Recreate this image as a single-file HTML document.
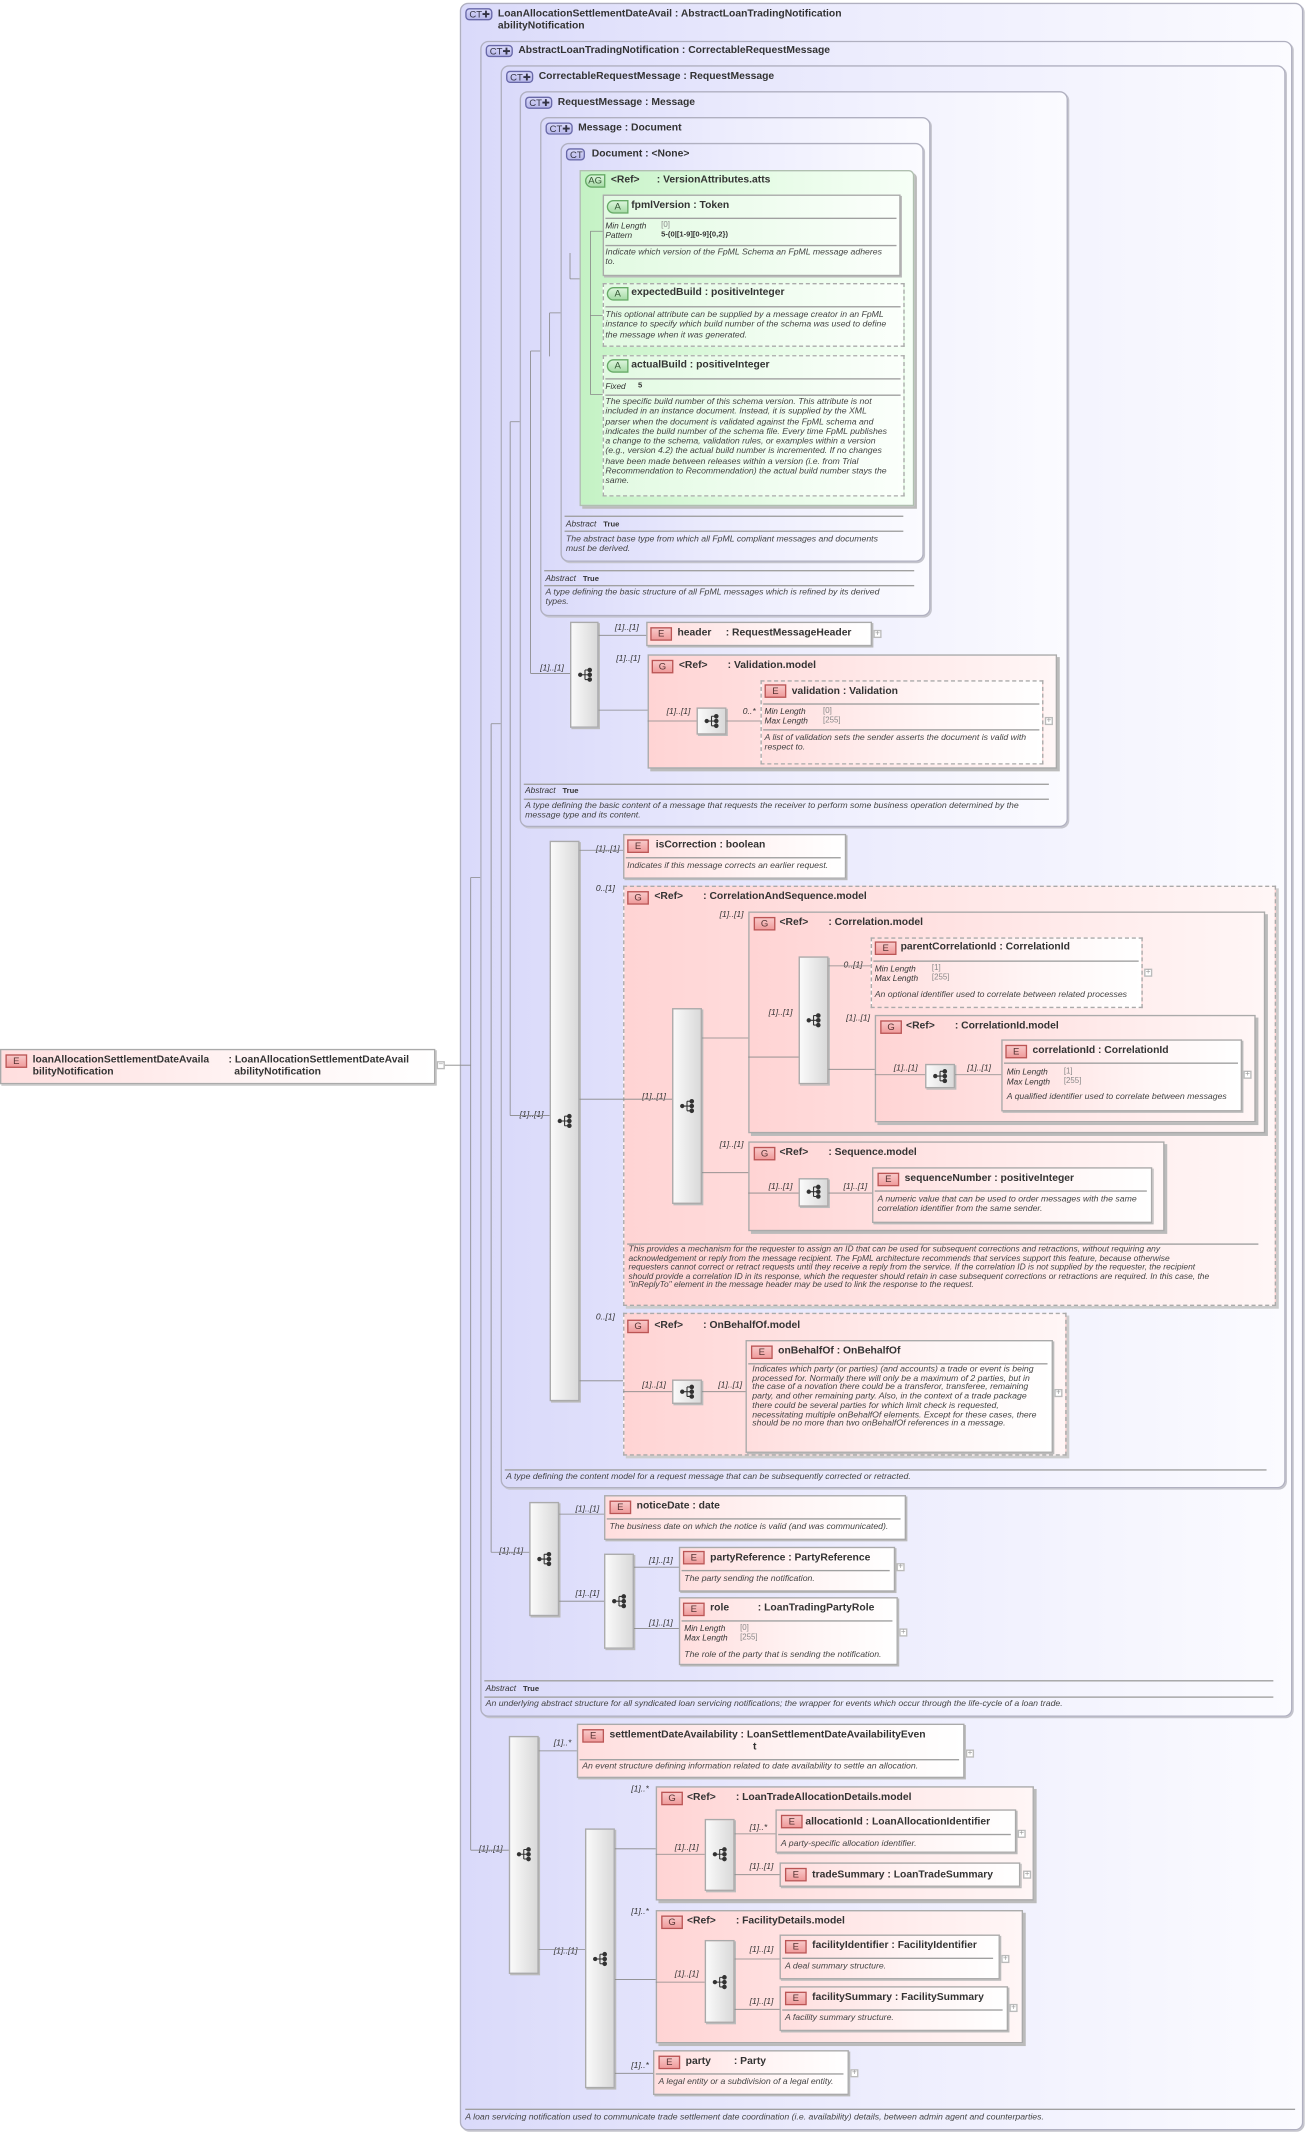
<!DOCTYPE html>
<html><head><meta charset="utf-8">
<style>
html,body{margin:0;padding:0;background:#fff;width:1306px;height:2133px;overflow:hidden}
#c{position:absolute;left:0;top:0;width:960px;height:1568px;transform:scale(1.36042);transform-origin:0 0;font-family:"Liberation Sans",sans-serif}
.b{position:absolute;box-sizing:border-box}
.ct{border:1px solid #b0b0c0;border-radius:6px;background:linear-gradient(90deg,#dadafa,#ececfd 45%,#fbfbff);box-shadow:1px 1px 0 #c4c4cc}
.ag{border:1px solid #b0c0b0;border-radius:0 4px 0 0;background:linear-gradient(90deg,#c4f2c4,#e8fce8 60%,#f6fff6);box-shadow:2px 2px 0 #bbb}
.at{border:1px solid #aaa;background:linear-gradient(90deg,#e2fae2,#fbfffb);box-shadow:1px 1px 0 #bbb}
.atd{border:1px dashed #aaa;background:linear-gradient(90deg,#e2fae2,#fbfffb)}
.g{border:1px solid #aaa;background:linear-gradient(90deg,#ffd4d4,#ffeaea 60%,#fff6f6);box-shadow:2px 2px 0 #bbb}
.gd{border:1px dashed #aaa;background:linear-gradient(90deg,#ffd4d4,#ffeaea 60%,#fff6f6);box-shadow:2px 2px 0 #ccc}
.e{border:1px solid #aaa;background:linear-gradient(90deg,#ffdede,#fff5f5 60%,#fff);box-shadow:1px 1px 0 #bbb}
.ed{border:1px dashed #aaa;background:linear-gradient(90deg,#ffdede,#fff5f5 60%,#fff)}
.sq{border:1px solid #aaa;background:linear-gradient(90deg,#fafafa,#d9d9d9);box-shadow:1px 1px 0 #bbb}
.t{position:absolute;font-size:7.6px;font-weight:bold;color:#333;white-space:pre;line-height:9px}
.d{position:absolute;font-size:6.4px;font-style:italic;color:#444;line-height:7.3px;white-space:pre}
.m{position:absolute;font-size:6.3px;font-style:italic;color:#333;white-space:pre;line-height:7px}
.k{position:absolute;font-size:6.1px;font-style:italic;color:#333;white-space:pre;line-height:7px}
.v{position:absolute;font-size:5.8px;color:#888;white-space:pre;line-height:7px}
.vb{position:absolute;font-size:5.6px;font-weight:bold;color:#333;white-space:pre;line-height:7px}
.hr{position:absolute;height:0;border-top:1px solid #a0a0a0}
.bc{position:absolute;height:9px;border:1px solid #6868a8;border-radius:3px;background:linear-gradient(#d8d8fa,#b8b8ea);font-size:7px;line-height:9px;color:#334;text-align:left;padding-left:2px;box-sizing:border-box}
.bE{position:absolute;width:16px;height:10px;border:1px solid #b55;background:linear-gradient(#f8c8c8,#f09c9c);font-size:7px;line-height:9px;color:#533;text-align:center;box-sizing:border-box}
.bA{position:absolute;width:16px;height:10px;border:1px solid #6a6;border-radius:5px 0 0 5px;background:linear-gradient(#dcf5dc,#a8dca8);font-size:7px;line-height:9px;color:#353;text-align:center;box-sizing:border-box}
.pl{position:absolute;width:6px;height:6px;border:1px solid #bbb;background:#fff;box-sizing:border-box;font-size:6px;line-height:4px;text-align:center;color:#999}
svg.ln{position:absolute;left:0;top:0}
</style></head><body><div id="c">

<!-- root element -->
<div class="b e" style="left:0;top:771px;width:320px;height:26px"></div>
<div class="bE" style="left:4px;top:775px">E</div>
<div class="t" style="left:24px;top:774px">loanAllocationSettlementDateAvaila
bilityNotification</div>
<div class="t" style="left:168px;top:774px">: LoanAllocationSettlementDateAvail
  abilityNotification</div>

<!-- CT boxes -->
<div class="b ct" style="left:338px;top:2px;width:620px;height:1564px"></div>
<div class="bc" style="left:342px;top:6px;width:20px">CT✚</div>
<div class="t" style="left:366px;top:5px">LoanAllocationSettlementDateAvail : AbstractLoanTradingNotification
abilityNotification</div>
<div class="hr" style="left:342px;top:1550px;width:610px"></div>
<div class="d" style="left:342px;top:1553px">A loan servicing notification used to communicate trade settlement date coordination (i.e. availability) details, between admin agent and counterparties.</div>

<div class="b ct" style="left:353px;top:30px;width:597px;height:1232px"></div>
<div class="bc" style="left:357px;top:33px;width:20px">CT✚</div>
<div class="t" style="left:381px;top:32px">AbstractLoanTradingNotification : CorrectableRequestMessage</div>
<div class="hr" style="left:356px;top:1235px;width:580px"></div>
<div class="k" style="left:357px;top:1238px">Abstract   <b style="font-style:normal;font-size:5.6px">True</b></div>
<div class="hr" style="left:356px;top:1247px;width:580px"></div>
<div class="d" style="left:357px;top:1249px">An underlying abstract structure for all syndicated loan servicing notifications; the wrapper for events which occur through the life-cycle of a loan trade.</div>

<div class="b ct" style="left:368px;top:48px;width:577px;height:1046px"></div>
<div class="bc" style="left:372px;top:52px;width:20px">CT✚</div>
<div class="t" style="left:396px;top:51px">CorrectableRequestMessage : RequestMessage</div>
<div class="hr" style="left:371px;top:1080px;width:560px"></div>
<div class="d" style="left:372px;top:1082px">A type defining the content model for a request message that can be subsequently corrected or retracted.</div>

<div class="b ct" style="left:382px;top:67px;width:403px;height:541px"></div>
<div class="bc" style="left:386px;top:71px;width:20px">CT✚</div>
<div class="t" style="left:410px;top:70px">RequestMessage : Message</div>
<div class="hr" style="left:385px;top:576px;width:386px"></div>
<div class="k" style="left:386px;top:578px">Abstract   <b style="font-style:normal;font-size:5.6px">True</b></div>
<div class="hr" style="left:385px;top:587px;width:386px"></div>
<div class="d" style="left:386px;top:589px">A type defining the basic content of a message that requests the receiver to perform some business operation determined by the
message type and its content.</div>

<div class="b ct" style="left:397px;top:86px;width:287px;height:367px"></div>
<div class="bc" style="left:401px;top:90px;width:20px">CT✚</div>
<div class="t" style="left:425px;top:89px">Message : Document</div>
<div class="hr" style="left:400px;top:419px;width:272px"></div>
<div class="k" style="left:401px;top:422px">Abstract   <b style="font-style:normal;font-size:5.6px">True</b></div>
<div class="hr" style="left:400px;top:430px;width:272px"></div>
<div class="d" style="left:401px;top:432px">A type defining the basic structure of all FpML messages which is refined by its derived
types.</div>

<div class="b ct" style="left:412px;top:105px;width:267px;height:308px"></div>
<div class="bc" style="left:416px;top:109px;width:14px">CT</div>
<div class="t" style="left:435px;top:108px">Document : &lt;None&gt;</div>
<div class="hr" style="left:415px;top:379px;width:249px"></div>
<div class="k" style="left:416px;top:382px">Abstract   <b style="font-style:normal;font-size:5.6px">True</b></div>
<div class="hr" style="left:415px;top:390px;width:249px"></div>
<div class="d" style="left:416px;top:393px">The abstract base type from which all FpML compliant messages and documents
must be derived.</div>

<!-- AG -->
<div class="b ag" style="left:426px;top:125px;width:246px;height:247px"></div>
<div class="bA" style="left:430px;top:128px;width:15px">AG</div>
<div class="t" style="left:449px;top:127px">&lt;Ref&gt;      : VersionAttributes.atts</div>

<div class="b at" style="left:443px;top:143px;width:219px;height:60px"></div>
<div class="bA" style="left:446px;top:147px">A</div>
<div class="t" style="left:464px;top:146px">fpmlVersion : Token</div>
<div class="hr" style="left:445px;top:160px;width:214px"></div>
<div class="k" style="left:445px;top:163px">Min Length
Pattern</div>
<div class="v" style="left:486px;top:163px">[0]</div>
<div class="vb" style="left:486px;top:170px">5-(0|[1-9][0-9]{0,2})</div>
<div class="hr" style="left:445px;top:180px;width:214px"></div>
<div class="d" style="left:445px;top:182px">Indicate which version of the FpML Schema an FpML message adheres
to.</div>

<div class="b atd" style="left:443px;top:208px;width:222px;height:47px"></div>
<div class="bA" style="left:446px;top:211px">A</div>
<div class="t" style="left:464px;top:210px">expectedBuild : positiveInteger</div>
<div class="hr" style="left:445px;top:225px;width:217px"></div>
<div class="d" style="left:445px;top:228px">This optional attribute can be supplied by a message creator in an FpML
instance to specify which build number of the schema was used to define
the message when it was generated.</div>

<div class="b atd" style="left:443px;top:261px;width:222px;height:104px"></div>
<div class="bA" style="left:446px;top:264px">A</div>
<div class="t" style="left:464px;top:263px">actualBuild : positiveInteger</div>
<div class="hr" style="left:445px;top:278px;width:217px"></div>
<div class="k" style="left:445px;top:281px">Fixed</div>
<div class="vb" style="left:469px;top:281px">5</div>
<div class="hr" style="left:445px;top:290px;width:217px"></div>
<div class="d" style="left:445px;top:292px">The specific build number of this schema version. This attribute is not
included in an instance document. Instead, it is supplied by the XML
parser when the document is validated against the FpML schema and
indicates the build number of the schema file. Every time FpML publishes
a change to the schema, validation rules, or examples within a version
(e.g., version 4.2) the actual build number is incremented. If no changes
have been made between releases within a version (i.e. from Trial
Recommendation to Recommendation) the actual build number stays the
same.</div>

<!-- RequestMessage content -->
<div class="b sq" style="left:419px;top:457px;width:21px;height:78px"></div>
<div class="m" style="left:397px;top:488px">[1]..[1]</div>
<div class="m" style="left:452px;top:458px">[1]..[1]</div>
<div class="b e" style="left:475px;top:457px;width:166px;height:18px"></div>
<div class="bE" style="left:478px;top:461px">E</div>
<div class="t" style="left:498px;top:460px">header     : RequestMessageHeader</div>
<div class="pl" style="left:642px;top:463px">+</div>
<div class="m" style="left:453px;top:481px">[1]..[1]</div>
<div class="b g" style="left:476px;top:481px;width:301px;height:84px"></div>
<div class="bE" style="left:479px;top:485px">G</div>
<div class="t" style="left:499px;top:484px">&lt;Ref&gt;       : Validation.model</div>
<div class="b sq" style="left:512px;top:520px;width:22px;height:20px"></div>
<div class="m" style="left:490px;top:520px">[1]..[1]</div>
<div class="m" style="left:546px;top:520px">0..*</div>
<div class="b ed" style="left:559px;top:500px;width:208px;height:62px"></div>
<div class="bE" style="left:562px;top:503px">E</div>
<div class="t" style="left:582px;top:503px">validation : Validation</div>
<div class="hr" style="left:561px;top:517px;width:203px"></div>
<div class="k" style="left:562px;top:520px">Min Length
Max Length</div>
<div class="v" style="left:605px;top:520px">[0]
[255]</div>
<div class="hr" style="left:561px;top:536px;width:203px"></div>
<div class="d" style="left:562px;top:539px">A list of validation sets the sender asserts the document is valid with
respect to.</div>
<div class="pl" style="left:768px;top:527px">+</div>

<!-- CorrectableRequestMessage content -->
<div class="b sq" style="left:404px;top:618px;width:22px;height:412px"></div>
<div class="m" style="left:382px;top:816px">[1]..[1]</div>
<div class="m" style="left:438px;top:621px">[1]..[1]</div>
<div class="b e" style="left:458px;top:613px;width:164px;height:33px"></div>
<div class="bE" style="left:461px;top:617px">E</div>
<div class="t" style="left:482px;top:616px">isCorrection : boolean</div>
<div class="hr" style="left:460px;top:630px;width:158px"></div>
<div class="d" style="left:461px;top:633px">Indicates if this message corrects an earlier request.</div>

<div class="m" style="left:438px;top:650px">0..[1]</div>
<div class="b gd" style="left:458px;top:651px;width:480px;height:309px"></div>
<div class="bE" style="left:461px;top:655px">G</div>
<div class="t" style="left:481px;top:654px">&lt;Ref&gt;       : CorrelationAndSequence.model</div>
<div class="b sq" style="left:494px;top:741px;width:22px;height:144px"></div>
<div class="m" style="left:472px;top:803px">[1]..[1]</div>
<div class="m" style="left:529px;top:669px">[1]..[1]</div>
<div class="b g" style="left:550px;top:670px;width:380px;height:163px"></div>
<div class="bE" style="left:554px;top:674px">G</div>
<div class="t" style="left:573px;top:673px">&lt;Ref&gt;       : Correlation.model</div>
<div class="b sq" style="left:587px;top:703px;width:22px;height:94px"></div>
<div class="m" style="left:565px;top:741px">[1]..[1]</div>
<div class="m" style="left:620px;top:706px">0..[1]</div>
<div class="b ed" style="left:640px;top:689px;width:200px;height:52px"></div>
<div class="bE" style="left:643px;top:692px">E</div>
<div class="t" style="left:662px;top:691px">parentCorrelationId : CorrelationId</div>
<div class="hr" style="left:642px;top:706px;width:195px"></div>
<div class="k" style="left:643px;top:709px">Min Length
Max Length</div>
<div class="v" style="left:685px;top:709px">[1]
[255]</div>
<div class="d" style="left:643px;top:728px">An optional identifier used to correlate between related processes</div>
<div class="pl" style="left:841px;top:712px">+</div>
<div class="m" style="left:622px;top:745px">[1]..[1]</div>
<div class="b g" style="left:643px;top:746px;width:280px;height:79px"></div>
<div class="bE" style="left:647px;top:750px">G</div>
<div class="t" style="left:666px;top:749px">&lt;Ref&gt;       : CorrelationId.model</div>
<div class="b sq" style="left:680px;top:782px;width:22px;height:18px"></div>
<div class="m" style="left:657px;top:782px">[1]..[1]</div>
<div class="m" style="left:711px;top:782px">[1]..[1]</div>
<div class="b e" style="left:736px;top:764px;width:177px;height:53px"></div>
<div class="bE" style="left:739px;top:768px">E</div>
<div class="t" style="left:759px;top:767px">correlationId : CorrelationId</div>
<div class="hr" style="left:738px;top:781px;width:172px"></div>
<div class="k" style="left:740px;top:785px">Min Length
Max Length</div>
<div class="v" style="left:782px;top:785px">[1]
[255]</div>
<div class="d" style="left:740px;top:803px">A qualified identifier used to correlate between messages</div>
<div class="pl" style="left:914px;top:787px">+</div>

<div class="m" style="left:529px;top:838px">[1]..[1]</div>
<div class="b g" style="left:550px;top:839px;width:306px;height:66px"></div>
<div class="bE" style="left:554px;top:843px">G</div>
<div class="t" style="left:573px;top:842px">&lt;Ref&gt;       : Sequence.model</div>
<div class="b sq" style="left:587px;top:866px;width:22px;height:21px"></div>
<div class="m" style="left:565px;top:869px">[1]..[1]</div>
<div class="m" style="left:620px;top:869px">[1]..[1]</div>
<div class="b e" style="left:641px;top:858px;width:206px;height:41px"></div>
<div class="bE" style="left:645px;top:862px">E</div>
<div class="t" style="left:665px;top:861px">sequenceNumber : positiveInteger</div>
<div class="hr" style="left:643px;top:875px;width:200px"></div>
<div class="d" style="left:645px;top:878px">A numeric value that can be used to order messages with the same
correlation identifier from the same sender.</div>

<div class="hr" style="left:461px;top:914px;width:464px"></div>
<div class="d" style="left:462px;top:916px;font-size:6.2px;line-height:6.6px">This provides a mechanism for the requester to assign an ID that can be used for subsequent corrections and retractions, without requiring any
acknowledgement or reply from the message recipient. The FpML architecture recommends that services support this feature, because otherwise
requesters cannot correct or retract requests until they receive a reply from the service. If the correlation ID is not supplied by the requester, the recipient
should provide a correlation ID in its response, which the requester should retain in case subsequent corrections or retractions are required. In this case, the
"inReplyTo" element in the message header may be used to link the response to the request.</div>

<div class="m" style="left:438px;top:965px">0..[1]</div>
<div class="b gd" style="left:458px;top:965px;width:326px;height:105px"></div>
<div class="bE" style="left:461px;top:970px">G</div>
<div class="t" style="left:481px;top:969px">&lt;Ref&gt;       : OnBehalfOf.model</div>
<div class="b sq" style="left:494px;top:1014px;width:22px;height:18px"></div>
<div class="m" style="left:472px;top:1015px">[1]..[1]</div>
<div class="m" style="left:528px;top:1015px">[1]..[1]</div>
<div class="b e" style="left:548px;top:985px;width:226px;height:83px"></div>
<div class="bE" style="left:552px;top:989px">E</div>
<div class="t" style="left:572px;top:988px">onBehalfOf : OnBehalfOf</div>
<div class="hr" style="left:550px;top:1002px;width:220px"></div>
<div class="d" style="left:553px;top:1004px;line-height:6.7px">Indicates which party (or parties) (and accounts) a trade or event is being
processed for. Normally there will only be a maximum of 2 parties, but in
the case of a novation there could be a transferor, transferee, remaining
party, and other remaining party. Also, in the context of a trade package
there could be several parties for which limit check is requested,
necessitating multiple onBehalfOf elements. Except for these cases, there
should be no more than two onBehalfOf references in a message.</div>
<div class="pl" style="left:775px;top:1021px">+</div>

<!-- AbstractLoanTradingNotification content -->
<div class="b sq" style="left:389px;top:1104px;width:22px;height:84px"></div>
<div class="m" style="left:367px;top:1137px">[1]..[1]</div>
<div class="m" style="left:423px;top:1106px">[1]..[1]</div>
<div class="b e" style="left:444px;top:1099px;width:222px;height:33px"></div>
<div class="bE" style="left:448px;top:1103px">E</div>
<div class="t" style="left:468px;top:1102px">noticeDate : date</div>
<div class="hr" style="left:446px;top:1116px;width:216px"></div>
<div class="d" style="left:448px;top:1119px">The business date on which the notice is valid (and was communicated).</div>
<div class="b sq" style="left:444px;top:1142px;width:22px;height:70px"></div>
<div class="m" style="left:423px;top:1168px">[1]..[1]</div>
<div class="m" style="left:477px;top:1144px">[1]..[1]</div>
<div class="b e" style="left:499px;top:1137px;width:159px;height:33px"></div>
<div class="bE" style="left:502px;top:1140px">E</div>
<div class="t" style="left:522px;top:1140px">partyReference : PartyReference</div>
<div class="hr" style="left:501px;top:1154px;width:153px"></div>
<div class="d" style="left:503px;top:1157px">The party sending the notification.</div>
<div class="pl" style="left:659px;top:1149px">+</div>
<div class="m" style="left:477px;top:1190px">[1]..[1]</div>
<div class="b e" style="left:499px;top:1174px;width:161px;height:50px"></div>
<div class="bE" style="left:502px;top:1178px">E</div>
<div class="t" style="left:522px;top:1177px">role          : LoanTradingPartyRole</div>
<div class="hr" style="left:501px;top:1191px;width:155px"></div>
<div class="k" style="left:503px;top:1194px">Min Length
Max Length</div>
<div class="v" style="left:544px;top:1194px">[0]
[255]</div>
<div class="d" style="left:503px;top:1213px">The role of the party that is sending the notification.</div>
<div class="pl" style="left:661px;top:1197px">+</div>

<!-- outer content -->
<div class="b sq" style="left:374px;top:1276px;width:22px;height:175px"></div>
<div class="m" style="left:352px;top:1356px">[1]..[1]</div>
<div class="m" style="left:407px;top:1278px">[1]..*</div>
<div class="b e" style="left:424px;top:1267px;width:285px;height:40px"></div>
<div class="bE" style="left:428px;top:1271px">E</div>
<div class="t" style="left:448px;top:1270px">settlementDateAvailability : LoanSettlementDateAvailabilityEven
                                                  t</div>
<div class="hr" style="left:426px;top:1293px;width:279px"></div>
<div class="d" style="left:428px;top:1295px">An event structure defining information related to date availability to settle an allocation.</div>
<div class="pl" style="left:710px;top:1286px">+</div>

<div class="b sq" style="left:430px;top:1344px;width:22px;height:191px"></div>
<div class="m" style="left:407px;top:1431px">[1]..[1]</div>
<div class="m" style="left:464px;top:1312px">[1]..*</div>
<div class="b g" style="left:482px;top:1313px;width:278px;height:84px"></div>
<div class="bE" style="left:486px;top:1317px">G</div>
<div class="t" style="left:505px;top:1316px">&lt;Ref&gt;       : LoanTradeAllocationDetails.model</div>
<div class="b sq" style="left:518px;top:1337px;width:22px;height:53px"></div>
<div class="m" style="left:496px;top:1355px">[1]..[1]</div>
<div class="m" style="left:551px;top:1340px">[1]..*</div>
<div class="b e" style="left:570px;top:1330px;width:177px;height:32px"></div>
<div class="bE" style="left:574px;top:1334px">E</div>
<div class="t" style="left:592px;top:1334px">allocationId : LoanAllocationIdentifier</div>
<div class="hr" style="left:572px;top:1348px;width:171px"></div>
<div class="d" style="left:574px;top:1352px">A party-specific allocation identifier.</div>
<div class="pl" style="left:748px;top:1345px">+</div>
<div class="m" style="left:551px;top:1369px">[1]..[1]</div>
<div class="b e" style="left:573px;top:1369px;width:177px;height:18px"></div>
<div class="bE" style="left:577px;top:1373px">E</div>
<div class="t" style="left:597px;top:1373px">tradeSummary : LoanTradeSummary</div>
<div class="pl" style="left:752px;top:1375px">+</div>

<div class="m" style="left:464px;top:1402px">[1]..*</div>
<div class="b g" style="left:482px;top:1404px;width:270px;height:98px"></div>
<div class="bE" style="left:486px;top:1408px">G</div>
<div class="t" style="left:505px;top:1407px">&lt;Ref&gt;       : FacilityDetails.model</div>
<div class="b sq" style="left:518px;top:1426px;width:22px;height:61px"></div>
<div class="m" style="left:496px;top:1448px">[1]..[1]</div>
<div class="m" style="left:551px;top:1430px">[1]..[1]</div>
<div class="b e" style="left:573px;top:1422px;width:162px;height:33px"></div>
<div class="bE" style="left:577px;top:1426px">E</div>
<div class="t" style="left:597px;top:1425px">facilityIdentifier : FacilityIdentifier</div>
<div class="hr" style="left:575px;top:1439px;width:155px"></div>
<div class="d" style="left:577px;top:1442px">A deal summary structure.</div>
<div class="pl" style="left:736px;top:1437px">+</div>
<div class="m" style="left:551px;top:1468px">[1]..[1]</div>
<div class="b e" style="left:573px;top:1460px;width:168px;height:33px"></div>
<div class="bE" style="left:577px;top:1464px">E</div>
<div class="t" style="left:597px;top:1463px">facilitySummary : FacilitySummary</div>
<div class="hr" style="left:575px;top:1477px;width:162px"></div>
<div class="d" style="left:577px;top:1480px">A facility summary structure.</div>
<div class="pl" style="left:742px;top:1473px">+</div>

<div class="m" style="left:464px;top:1515px">[1]..*</div>
<div class="b e" style="left:480px;top:1507px;width:144px;height:33px"></div>
<div class="bE" style="left:484px;top:1511px">E</div>
<div class="t" style="left:504px;top:1510px">party        : Party</div>
<div class="hr" style="left:482px;top:1524px;width:138px"></div>
<div class="d" style="left:484px;top:1527px">A legal entity or a subdivision of a legal entity.</div>
<div class="pl" style="left:625px;top:1521px">+</div>
<div class="pl" style="left:321px;top:780px">−</div>

<!-- connector lines -->
<svg class="ln" width="960" height="1568" viewBox="0 0 960 1568" fill="none" stroke="#888" stroke-width="0.6">
<path d="M327 783H346M346 645V1360M346 645H353M346 1360H374"/>
<path d="M361 532V1141M361 532H368M361 1141H389"/>
<path d="M375 310V820M375 310H382M375 820H404"/>
<path d="M390 258V495M390 258H397M390 495H419"/>
<path d="M404 230V262M404 230H412"/>
<path d="M419 186V205M419 205H426"/>
<path d="M434 170V220M434 170H443M434 232H443M434 290H443M434 220V290"/>
<path d="M440 467H475M440 522H476M476 530H512M534 530H559"/>
<path d="M426 625H458M426 808H458M458 808H494M516 763H550M516 862H550M550 777H587M609 710H640M609 786H643M643 790H680M702 790H736M550 877H587M609 877H641M426 1015H458M458 1023H494M516 1023H548"/>
<path d="M411 1113H444M411 1177H444M466 1152H499M466 1197H499"/>
<path d="M396 1287H424M396 1433H430M452 1359H482M482 1363H518M540 1348H570M540 1378H573M452 1455H482M482 1457H518M540 1440H573M540 1477H573M452 1524H480"/>
</svg>

<!-- seq icons -->
<svg class="ln" width="960" height="1568" viewBox="0 0 960 1568">
<defs><g id="ic" fill="#333" stroke="#333" stroke-width="0.8"><circle cx="-3.5" cy="0" r="1.2"/><path d="M-3.5 0H0M0 -3.5V3.5M0 -3.5H3M0 0H3M0 3.5H3" fill="none"/><circle cx="3.5" cy="-3.5" r="1.3"/><circle cx="3.5" cy="0" r="1.3"/><circle cx="3.5" cy="3.5" r="1.3"/></g></defs>
<use href="#ic" x="430" y="496"/>
<use href="#ic" x="523" y="530"/>
<use href="#ic" x="415" y="824"/>
<use href="#ic" x="505" y="813"/>
<use href="#ic" x="598" y="750"/>
<use href="#ic" x="691" y="791"/>
<use href="#ic" x="598" y="876"/>
<use href="#ic" x="505" y="1023"/>
<use href="#ic" x="400" y="1146"/>
<use href="#ic" x="455" y="1177"/>
<use href="#ic" x="385" y="1363"/>
<use href="#ic" x="441" y="1440"/>
<use href="#ic" x="529" y="1363"/>
<use href="#ic" x="529" y="1457"/>
</svg>
</div></body></html>
